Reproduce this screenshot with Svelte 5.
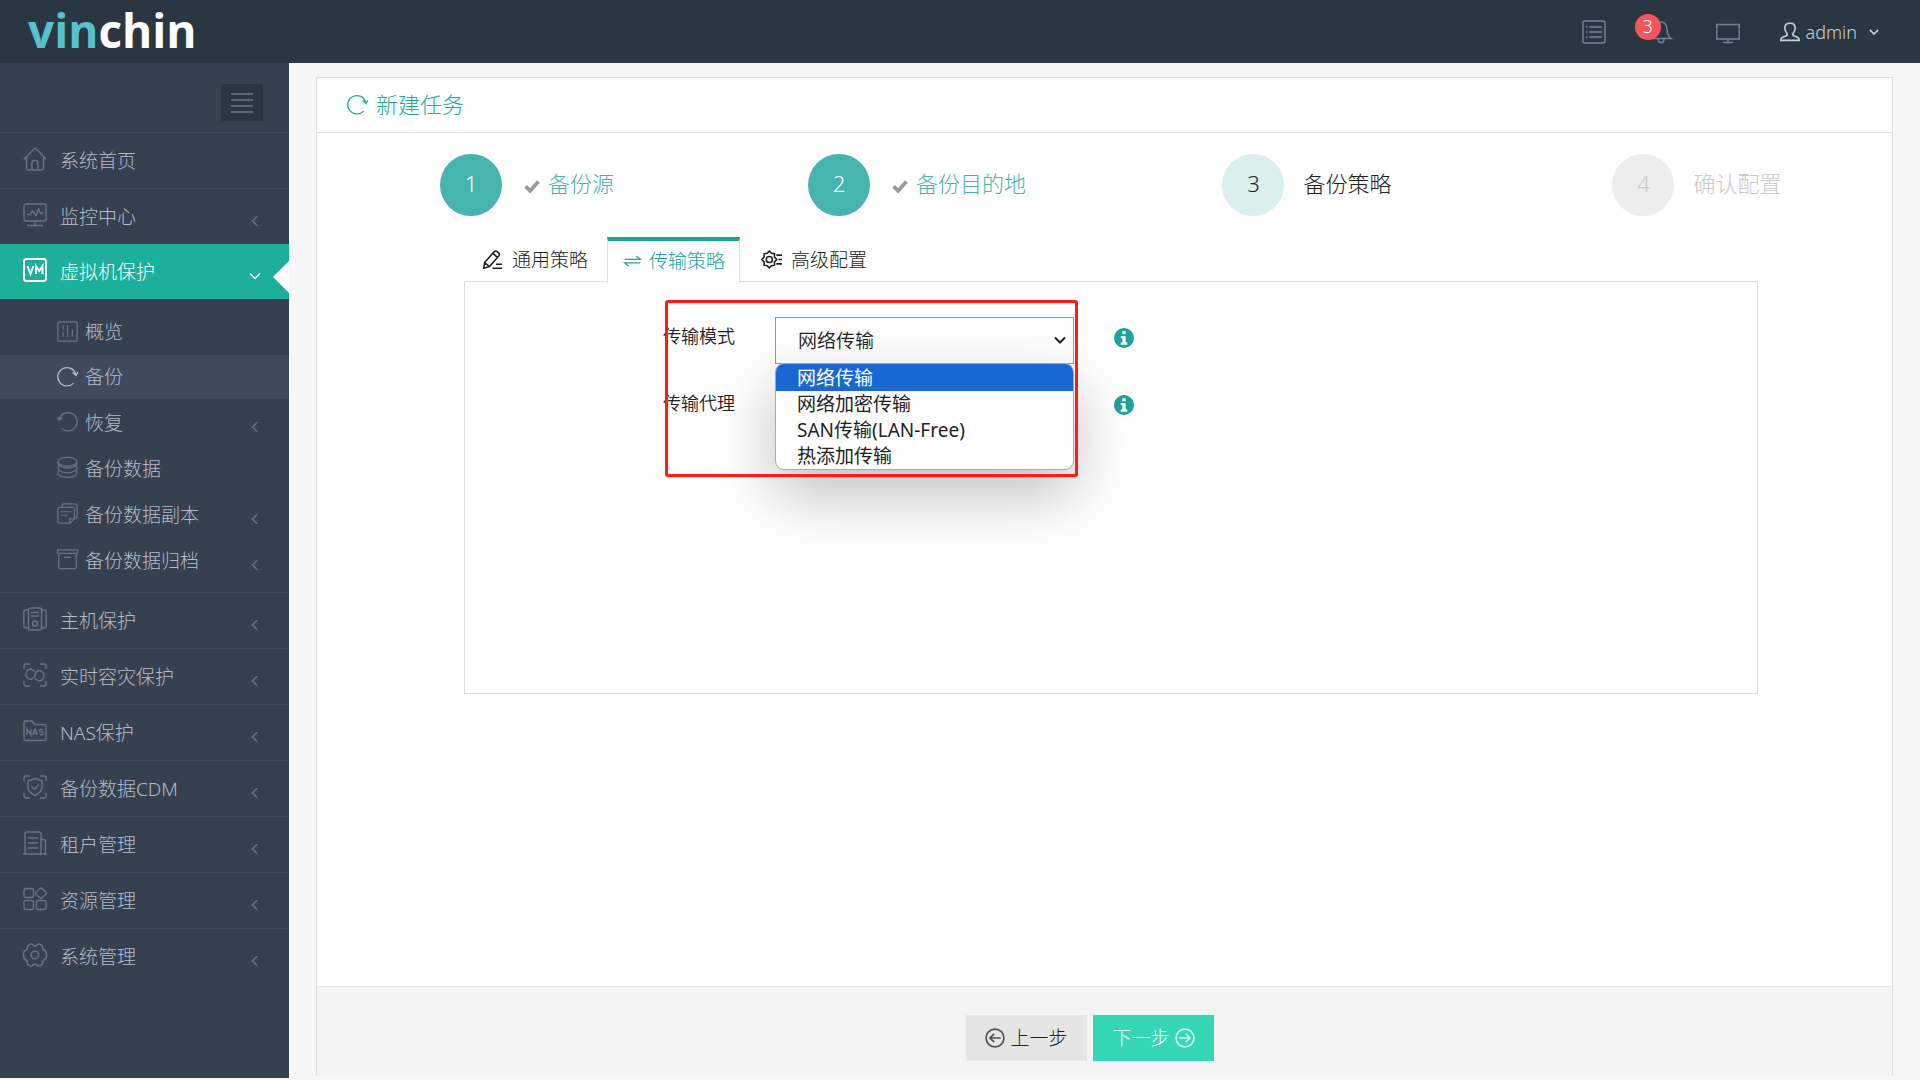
<script>
  const menuTop = [
    { icon: 'home', label: '系统首页', arrow: false },
    { icon: 'monitor', label: '监控中心', arrow: true },
    { icon: 'vm', label: '虚拟机保护', arrow: true, active: true }
  ];
  const subMenu = [
    { icon: 'overview', label: '概览' },
    { icon: 'backup', label: '备份', active: true },
    { icon: 'restore', label: '恢复', arrow: true },
    { icon: 'data', label: '备份数据' },
    { icon: 'copy', label: '备份数据副本', arrow: true },
    { icon: 'archive', label: '备份数据归档', arrow: true }
  ];
  const menuBottom = [
    { icon: 'host', label: '主机保护' },
    { icon: 'dr', label: '实时容灾保护' },
    { icon: 'nas', label: 'NAS保护' },
    { icon: 'cdm', label: '备份数据CDM' },
    { icon: 'tenant', label: '租户管理' },
    { icon: 'resource', label: '资源管理' },
    { icon: 'gear', label: '系统管理' }
  ];
  const steps = [
    { n: 1, label: '备份源', state: 'done' },
    { n: 2, label: '备份目的地', state: 'done' },
    { n: 3, label: '备份策略', state: 'current' },
    { n: 4, label: '确认配置', state: 'todo' }
  ];
  const modes = ['网络传输', '网络加密传输', 'SAN传输(LAN-Free)', '热添加传输'];
  let mode = $state('网络传输');
  let agent = $state('');
</script>

{#snippet icon(name)}
  <svg class="ic" viewBox="0 0 24 24" aria-hidden="true">
    {#if name === 'home'}
      <path d="M.8 12.2 12 1l11.200 11.200M3.500 10v11.500q0 1.500 1.500 1.500h14q1.500 0 1.500-1.500V10M9 23v-7.500q0-2 2-2h2q2 0 2 2V23" />
    {:else if name === 'monitor'}
      <rect x="1" y="1" width="22" height="17" rx="2" /><path d="M12 18v4M4 22.500h16M4 11.500h3l2.500-3.500 3.500 4.500L15.500 6l2.500 5 2.500-2" />
    {:else if name === 'vm'}
      <rect x="1" y="1" width="22" height="22" rx="2.500" stroke-width="2" /><path d="m4.500 8 3 8 3-8M13 16V8l3.200 5L19.500 8v8" stroke-width="1.900" />
    {:else if name === 'overview'}
      <rect x="1" y="1" width="22" height="22" rx="2" /><path d="M7 5v5M7 13v5M12 5v13M17.500 10v8" />
    {:else if name === 'backup'}
      <path d="M19 19.500A10.500 10.500 0 1 1 21.500 9.500M17.800 7.500l4 3.500 2-4.200" />
    {:else if name === 'restore'}
      <path d="M5 19.500A10.500 10.500 0 1 0 2.500 9.500M6.200 7.500l-4 3.500-2-4.200" />
    {:else if name === 'data'}
      <ellipse cx="12" cy="5.500" rx="11" ry="5" /><path d="M1 5.500c0 2 .5 3 1.500 4-2 2-2 4 0 5.500-2 2-1.500 3-1 4.500 3 5 18 5 21 0 .5-1.500 1-2.500-1-4.500 2-1.500 2-3.500 0-5.500 1-1 1.500-2 1.500-4M2.500 9.500c4 4 15 4 19 0M2.500 15c4 4 15 4 19 0" />
    {:else if name === 'copy'}
      <path d="M6 4.500V3q0-2 2-2h13q2 0 2 2v12q0 2-2 2h-1M3 5h15q2 0 2 2v11l-5 5H3q-2 0-2-2V7q0-2 2-2ZM14.500 23v-5H20M4.500 10h12M4.500 14h8" />
    {:else if name === 'archive'}
      <rect x=".5" y="1" width="23" height="4" rx="1" /><path d="M2 5v15q0 2.500 2 2.500h16q2 0 2-2.500V5M8 9.500h8" />
    {:else if name === 'host'}
      <rect x="5.500" y="1" width="13" height="22" rx="2" /><path d="M5.500 3H3Q.8 3 .8 5v14q0 2 2.200 2h2.500M18.500 3H21q2.200 0 2.200 2v14q0 2-2.200 2h-2.500M8 5.500h8M8 9h8" /><circle cx="12" cy="16.500" r="2.500" />
    {:else if name === 'dr'}
      <path d="M1 6V3q0-2 2-2h4M17 1h4q2 0 2 2v3M23 18v3q0 2-2 2h-4M7 23H3q-2 0-2-2v-3" /><path d="M11.500 8.500A4.700 5 0 1 0 12 13V11a4.700 5 0 1 1 .5 4.500" />
    {:else if name === 'nas'}
      <path d="M2.500 2H9l3 3.500h9.500q1.500 0 1.500 1.500v13q0 1.500-1.500 1.500h-19Q1 21.500 1 20V3.500Q1 2 2.500 2Z" />
      <path d="M4 16v-6l4 6v-6M9.500 16l2.500-6 2.500 6M10.300 14.200h3.400M20 11.200q-3.500-2-3.500 0 0 1.500 2 1.700 2 .2 2 1.700-.5 2-4 .5" />
    {:else if name === 'cdm'}
      <path d="M1 6V3q0-2 2-2h4M17 1h4q2 0 2 2v3M23 18v3q0 2-2 2h-4M7 23H3q-2 0-2-2v-3" /><path d="m12 3.500 7 2.500v6q0 5-7 8.500Q5 17 5 12V6ZM8.500 11.500l3 2.700 4.500-4.700" />
    {:else if name === 'tenant'}
      <path d="M0 23h24M2 23V3q0-2 2-2h12q2 0 2 2v20M18 8.500h3q1.500 0 1.500 2V23M5 7h10M5 12h10M5 17h10" />
    {:else if name === 'resource'}
      <rect x="1" y="1.500" width="9.500" height="9" rx="2" /><rect x="1" y="13.500" width="9.500" height="9" rx="2" /><rect x="13.500" y="13.500" width="9.500" height="9" rx="2" /><path d="m17 1.500-4 3.700q-1 1 0 2l4 3.600q1 1 2 0l4-3.600q1-1 0-2l-4-3.700q-1-1-2 0Z" />
    {:else if name === 'gear'}
      <path d="M10 2q2 2 4 0 1-1.500 3-.7 3 1 2.700 3.200Q19.500 7 22 7.700q1.500.8 1.500 4.300T22 16.300q-2.500.7-2.300 3.200.3 2.200-2.700 3.200-2 .8-3-.7-2-2-4 0-1 1.500-3 .7-3-1-2.700-3.200Q4.500 17 2 16.300.500 15.500.500 12T2 7.700Q4.500 7 4.300 4.500 4 2.300 7 1.300 9 .5 10 2Z" /><circle cx="12" cy="12" r="3.800" />
    {:else if name === 'list'}
      <rect x="1" y="1" width="22" height="22" rx="2" /><path d="M7.500 7H20M7.500 12H20M7.500 17H20M4 7h1.500M4 12h1.500M4 17h1.500" />
    {:else if name === 'bell'}
      <path d="M2 18.500q4-3 4-10Q7 2 12 2t6 6.500q0 7 4 10ZM9 19q0 3.500 3 3.500t3-3.500" />
    {:else if name === 'screen'}
      <path d="M.8 4.500h22.400V19H.8ZM12 19v3.500M7 22.500h10" />
    {:else if name === 'user'}
      <path d="M8.500 14q-2.700-3-2.700-7.300Q6 1.500 12 1.500t6.200 5.200Q18.200 11 15.500 14q-.5 2 1.500 2.800l4 1.400q2 1 2 3.800H1q0-2.800 2-3.800l4-1.400Q9 16 8.500 14Z" />
    {:else if name === 'pen'}
      <path d="m3 15.500 11-12.500q1.500-1.500 3.200 0l2 1.700q1.500 1.500.2 3L8.500 20 2 22ZM12.500 5l5 4.500M3 15.500 8.500 20M16 17.500h7M12 22h11" />
    {:else if name === 'swap'}
      <path d="M1 9h22l-5.500-4.500M23 14H1l5.500 4.500" />
    {:else if name === 'config'}
      <path d="M15.500 5.500 12 5 9.500 2.500 7 5l-3.500.5.200 3.500L1 12l2.700 3-.2 3.500L7 19l2.500 2.500L12 19l3.500-.5-.2-3.500L18 12l-2.700-3ZM17.500 7H24M20 12h4M17.500 17H24" /><circle cx="9.500" cy="12" r="3.500" />
    {:else if name === 'prev'}
      <circle cx="12" cy="12" r="10.700" /><path d="M19 12H6.500M11 7l-5 5 5 5" />
    {:else if name === 'next'}
      <circle cx="12" cy="12" r="10.700" /><path d="M5 12h12.500M13 7l5 5-5 5" />
    {:else if name === 'check'}
      <path d="m3.500 12.500 6 6L20.500 6" stroke-width="5" />
    {:else if name === 'left'}
      <path d="M17 2 7 12l10 10" />
    {:else if name === 'down'}
      <path d="m2 7 10 10L22 7" />
    {:else if name === 'info'}
      <circle cx="12" cy="12" r="12" fill="currentColor" stroke="none" /><path d="M10 4h4v3.500h-4ZM8 9.500h6v8h2V20H8v-2.500h2V12H8Z" fill="#fff" stroke="none" />
    {/if}
  </svg>
{/snippet}

{#snippet mainItem(item)}
  <a class="item" class:active={item.active} href="#{item.icon}">
    <span class="main-icon">{@render icon(item.icon)}</span>
    <span class="text">{item.label}</span>
    {#if item.active}
      <span class="arrow open">{@render icon('down')}</span>
    {:else if item.arrow !== false}
      <span class="arrow">{@render icon('left')}</span>
    {/if}
  </a>
{/snippet}

<div class="page">
  <header>
    <a class="logo" href="#home"><span>vin</span>chin</a>
    <nav class="tools" aria-label="工具">
      <button class="tool" aria-label="任务列表">{@render icon('list')}</button>
      <button class="tool" aria-label="通知">{@render icon('bell')}<span class="badge">3</span></button>
      <button class="tool" aria-label="屏幕">{@render icon('screen')}</button>
      <button class="user">
        <span class="user-icon">{@render icon('user')}</span>admin<span class="caret">{@render icon('down')}</span>
      </button>
    </nav>
  </header>

  <div class="shell">
    <aside>
      <div class="toggle-row">
        <button class="toggle" aria-label="折叠菜单"><i></i><i></i><i></i><i></i></button>
      </div>
      <nav aria-label="主菜单">
        {#each menuTop as item}{@render mainItem(item)}{/each}
        <div class="sub">
          {#each subMenu as item}
            <a class="sub-item" class:selected={item.active} href="#{item.icon}">
              <span class="sub-icon">{@render icon(item.icon)}</span>
              <span class="text">{item.label}</span>
              {#if item.arrow}<span class="arrow">{@render icon('left')}</span>{/if}
            </a>
          {/each}
        </div>
        {#each menuBottom as item}{@render mainItem(item)}{/each}
      </nav>
    </aside>

    <main>
      <section class="card">
        <h1><span class="title-icon">{@render icon('backup')}</span>新建任务</h1>

        <div class="wizard">
          <ol class="steps">
            {#each steps as s}
              <li class={s.state}>
                <span class="num">{s.n}</span>
                <span class="step-label">
                  {#if s.state === 'done'}<span class="tick">{@render icon('check')}</span>{/if}{s.label}
                </span>
              </li>
            {/each}
          </ol>

          <div class="config">
            <div class="tabs" role="tablist">
              <button class="tab" role="tab" aria-selected="false"><span class="tab-icon">{@render icon('pen')}</span>通用策略</button>
              <button class="tab current" role="tab" aria-selected="true"><span class="tab-icon swap">{@render icon('swap')}</span>传输策略</button>
              <button class="tab" role="tab" aria-selected="false"><span class="tab-icon">{@render icon('config')}</span>高级配置</button>
            </div>
            <div class="panel" role="tabpanel">
              <form class="form">
                <label for="mode">传输模式</label>
                <div class="field">
                  <select id="mode" bind:value={mode}>
                    {#each modes as m}<option value={m}>{m}</option>{/each}
                  </select>
                  <span class="select-caret">{@render icon('down')}</span>
                  <ul class="menu" role="listbox" aria-label="传输模式">
                    {#each modes as m}
                      <li role="option" aria-selected={m === mode} class:chosen={m === mode}>{m}</li>
                    {/each}
                  </ul>
                </div>
                <span class="info">{@render icon('info')}</span>

                <label for="agent">传输代理</label>
                <div class="field">
                  <input id="agent" type="text" bind:value={agent} />
                </div>
                <span class="info">{@render icon('info')}</span>
                <div class="frame"></div>
              </form>
            </div>
          </div>
        </div>

        <footer>
          <button class="btn">{@render icon('prev')}上一步</button>
          <button class="btn primary">下一步{@render icon('next')}</button>
        </footer>
      </section>
    </main>
  </div>
</div>

<style>
  :global(body) {
    margin: 0;
    background: #f7f7f7;
  }
  .page {
    min-height: 100vh;
    display: flex;
    flex-direction: column;
    box-sizing: border-box;
    padding-bottom: 2px;
    font: 300 19px/28px 'Noto Sans', 'Noto Sans CJK SC', sans-serif;
    color: #222;
  }
  .page * {
    box-sizing: border-box;
  }
  button {
    font: inherit;
    color: inherit;
    background: none;
    border: 0;
    padding: 0;
    margin: 0;
    cursor: pointer;
  }
  a {
    color: inherit;
    text-decoration: none;
  }
  .ic {
    display: block;
    width: 100%;
    height: 100%;
    flex: none;
    fill: none;
    stroke: currentColor;
    stroke-width: 1.4;
    overflow: visible;
  }

  header {
    height: 63px;
    display: flex;
    align-items: center;
    justify-content: space-between;
    padding: 0 41px 0 28px;
    background: #2b3643;
  }
  .logo {
    font: 700 46px/60px 'Open Sans', sans-serif;
    padding-bottom: 3px;
    color: #fff;
  }
  .logo span {
    color: #57c1cc;
  }
  .tools {
    display: flex;
    align-items: center;
    color: #74849b;
  }
  .tool {
    position: relative;
    width: 24px;
    height: 24px;
    margin-right: 43px;
  }
  .tool:nth-child(3) {
    margin-right: 40px;
  }
  .badge {
    position: absolute;
    left: -14px;
    top: -6px;
    width: 26px;
    height: 26px;
    border-radius: 13px;
    background: #f3565d;
    color: #fff;
    font-size: 18px;
    line-height: 25px;
  }
  .user {
    display: flex;
    align-items: center;
    font-size: 18px;
    color: #c6cfda;
  }
  .user-icon {
    width: 20px;
    height: 20px;
    margin-right: 6px;
  }
  .user-icon :global(.ic) {
    stroke-width: 2;
  }
  .caret {
    width: 10px;
    height: 10px;
    margin-left: 12px;
  }
  .caret :global(.ic) {
    stroke-width: 4;
  }

  .shell {
    flex: 1;
    display: flex;
  }
  aside {
    width: 289px;
    flex: none;
    background: #364150;
    color: #b4bcc8;
  }
  .toggle-row {
    height: 70px;
    display: flex;
    justify-content: flex-end;
    padding: 21px 26px 0 0;
    border-bottom: 1px solid #3d4957;
  }
  .toggle {
    width: 42px;
    height: 37px;
    display: flex;
    flex-direction: column;
    align-items: center;
    justify-content: center;
    gap: 4px;
    background: #2b3643;
  }
  .toggle i {
    width: 22px;
    height: 2px;
    background: #5a6778;
  }
  .item {
    position: relative;
    display: flex;
    align-items: center;
    height: 56px;
    padding: 0 25px 0 22px;
    border-bottom: 1px solid #3d4957;
  }
  .item:last-child {
    border-bottom-color: transparent;
  }
  .item.active {
    height: 55px;
    margin-top: -1px;
    background: #1caf9a;
    color: #fff;
    border-bottom: 0;
  }
  .item.active::after {
    content: '';
    position: absolute;
    right: 0;
    top: 17px;
    border: 16px solid transparent;
    border-left: 0;
    border-right-color: #fff;
  }
  .text {
    flex: 1;
  }
  .main-icon {
    width: 24px;
    height: 24px;
    margin: 0 13px 4px 1px;
    color: #66748a;
  }
  .active .main-icon,
  .active .arrow {
    color: #fff;
  }
  .arrow {
    width: 12px;
    height: 12px;
    margin: 8px 3px 0 0;
    color: #66748a;
  }
  .arrow :global(.ic) {
    stroke-width: 3;
  }
  .sub {
    display: flex;
    flex-direction: column;
    gap: 1px;
    padding: 11px 0 9px;
    border-bottom: 1px solid #3d4957;
  }
  .sub-item {
    display: flex;
    align-items: center;
    height: 45px;
    padding: 0 25px 0 57px;
  }
  .sub-item:first-child,
  .sub-item.selected {
    height: 44px;
  }
  .selected {
    background: #3e4b5c;
  }
  .sub-icon {
    width: 21px;
    height: 21px;
    margin: 0 7px 2px 0;
    color: #66748a;
  }
  .selected .sub-icon {
    color: #b4bcc8;
  }

  main {
    flex: 1;
    display: flex;
    padding: 14px 27px 2px;
  }
  .card {
    flex: 1;
    display: flex;
    flex-direction: column;
    border: 1px solid #ddd;
    border-bottom: 0;
    background: #fff;
  }
  h1 {
    display: flex;
    align-items: center;
    height: 55px;
    margin: 0;
    padding: 0 0 2px 30px;
    border-bottom: 1px solid #ddd;
    font-size: 22px;
    font-weight: 300;
    color: #1caf9a;
  }
  .title-icon {
    width: 21px;
    height: 21px;
    margin-right: 8px;
  }
  .wizard {
    flex: 1;
    padding-top: 21px;
  }
  .steps {
    display: grid;
    grid-template-columns: repeat(4, 1fr);
    list-style: none;
    margin: 0;
    padding: 0 0 0 15px;
    font-size: 22px;
  }
  .steps li {
    display: flex;
    align-items: center;
    justify-content: center;
    gap: 19px;
    height: 62px;
  }
  .num {
    width: 62px;
    height: 62px;
    border-radius: 50%;
    line-height: 58px;
    text-align: center;
  }
  .step-label {
    display: flex;
    align-items: center;
    padding-bottom: 4px;
  }
  .done {
    color: #45b5ae;
  }
  .done .num {
    background: #45b5ae;
    color: #fff;
  }
  .current .num {
    background: #d9f0ee;
  }
  .todo {
    color: #c9c9c9;
  }
  .todo .num {
    background: #ededed;
  }
  .tick {
    width: 18px;
    height: 18px;
    margin: 6px 7px 0 2px;
    color: #999;
  }
  .config {
    margin: 21px 134px 0 147px;
  }
  .tabs {
    display: flex;
    padding-left: 1px;
    height: 44px;
  }
  .tab {
    display: flex;
    align-items: center;
    padding: 0 18px 0 16px;
    border: 1px solid transparent;
    border-bottom: 0;
  }
  .tab.current {
    height: 46px;
    border-color: #ddd;
    border-top: 4px solid #1ba39c;
    background: #fff;
    color: #1ba39c;
    z-index: 1;
    padding: 0 14px 2px 16px;
  }
  .tab.current + .tab {
    padding-left: 20px;
  }
  .tab-icon {
    width: 21px;
    height: 21px;
    margin-right: 9px;
  }
  .tab-icon :global(.ic) {
    stroke-width: 1.8;
  }
  .tab .swap {
    width: 17px;
    height: 17px;
    margin-right: 8px;
  }
  .panel {
    min-height: 413px;
    border: 1px solid #ddd;
    padding: 35px 0 0 198px;
  }
  .form {
    position: relative;
    display: grid;
    grid-template-columns: 112px 299px 60px;
    row-gap: 20px;
    width: fit-content;
  }
  .form label {
    font-size: 18px;
    line-height: 38px;
    font-weight: 350;
  }
  .field {
    position: relative;
    height: 47px;
  }
  select,
  input {
    width: 100%;
    height: 47px;
    appearance: none;
    margin: 0;
    padding: 0 22px;
    border: 1px solid #999;
    border-radius: 0;
    background: #fff;
    font: inherit;
    font-weight: 350;
    color: #222;
  }
  input {
    height: 36px;
  }
  .select-caret {
    position: absolute;
    right: 8px;
    top: 17px;
    width: 12px;
    height: 12px;
    pointer-events: none;
  }
  .select-caret :global(.ic) {
    stroke-width: 4;
  }
  .menu {
    position: absolute;
    z-index: 2;
    top: 46px;
    left: 0;
    right: 0;
    margin: 0;
    padding: 0;
    list-style: none;
    border: 1px solid #aaa;
    border-radius: 9px;
    overflow: hidden;
    background: #fff;
    box-shadow: 0 24px 64px rgba(0, 0, 0, 0.26);
    font-weight: 400;
    line-height: 26px;
  }
  .menu li {
    padding-left: 21px;
  }
  .menu li:first-child {
    padding-top: 1px;
  }
  .menu .chosen {
    background: #1967d2;
    color: #fff;
  }
  .info {
    width: 20px;
    height: 20px;
    margin: 11px 0 0 40px;
    color: #1ba39c;
  }
  .frame {
    position: absolute;
    z-index: 3;
    left: 2px;
    top: -17px;
    width: 413px;
    height: 177px;
    border: 3px solid #ff1d12;
    border-radius: 3px;
    pointer-events: none;
  }

  footer {
    display: flex;
    justify-content: center;
    gap: 6px;
    height: 90px;
    padding: 28px 29px 0 0;
    border-top: 1px solid #e4e4e4;
    background: #f4f4f4;
  }
  .btn {
    display: flex;
    align-items: center;
    justify-content: center;
    gap: 5px;
    width: 121px;
    height: 46px;
    background: #e5e5e5;
  }
  .btn :global(.ic) {
    width: 20px;
    height: 20px;
    stroke-width: 2;
    opacity: 0.75;
  }
  .btn.primary {
    background: #36d7b7;
    color: #fff;
  }
</style>
